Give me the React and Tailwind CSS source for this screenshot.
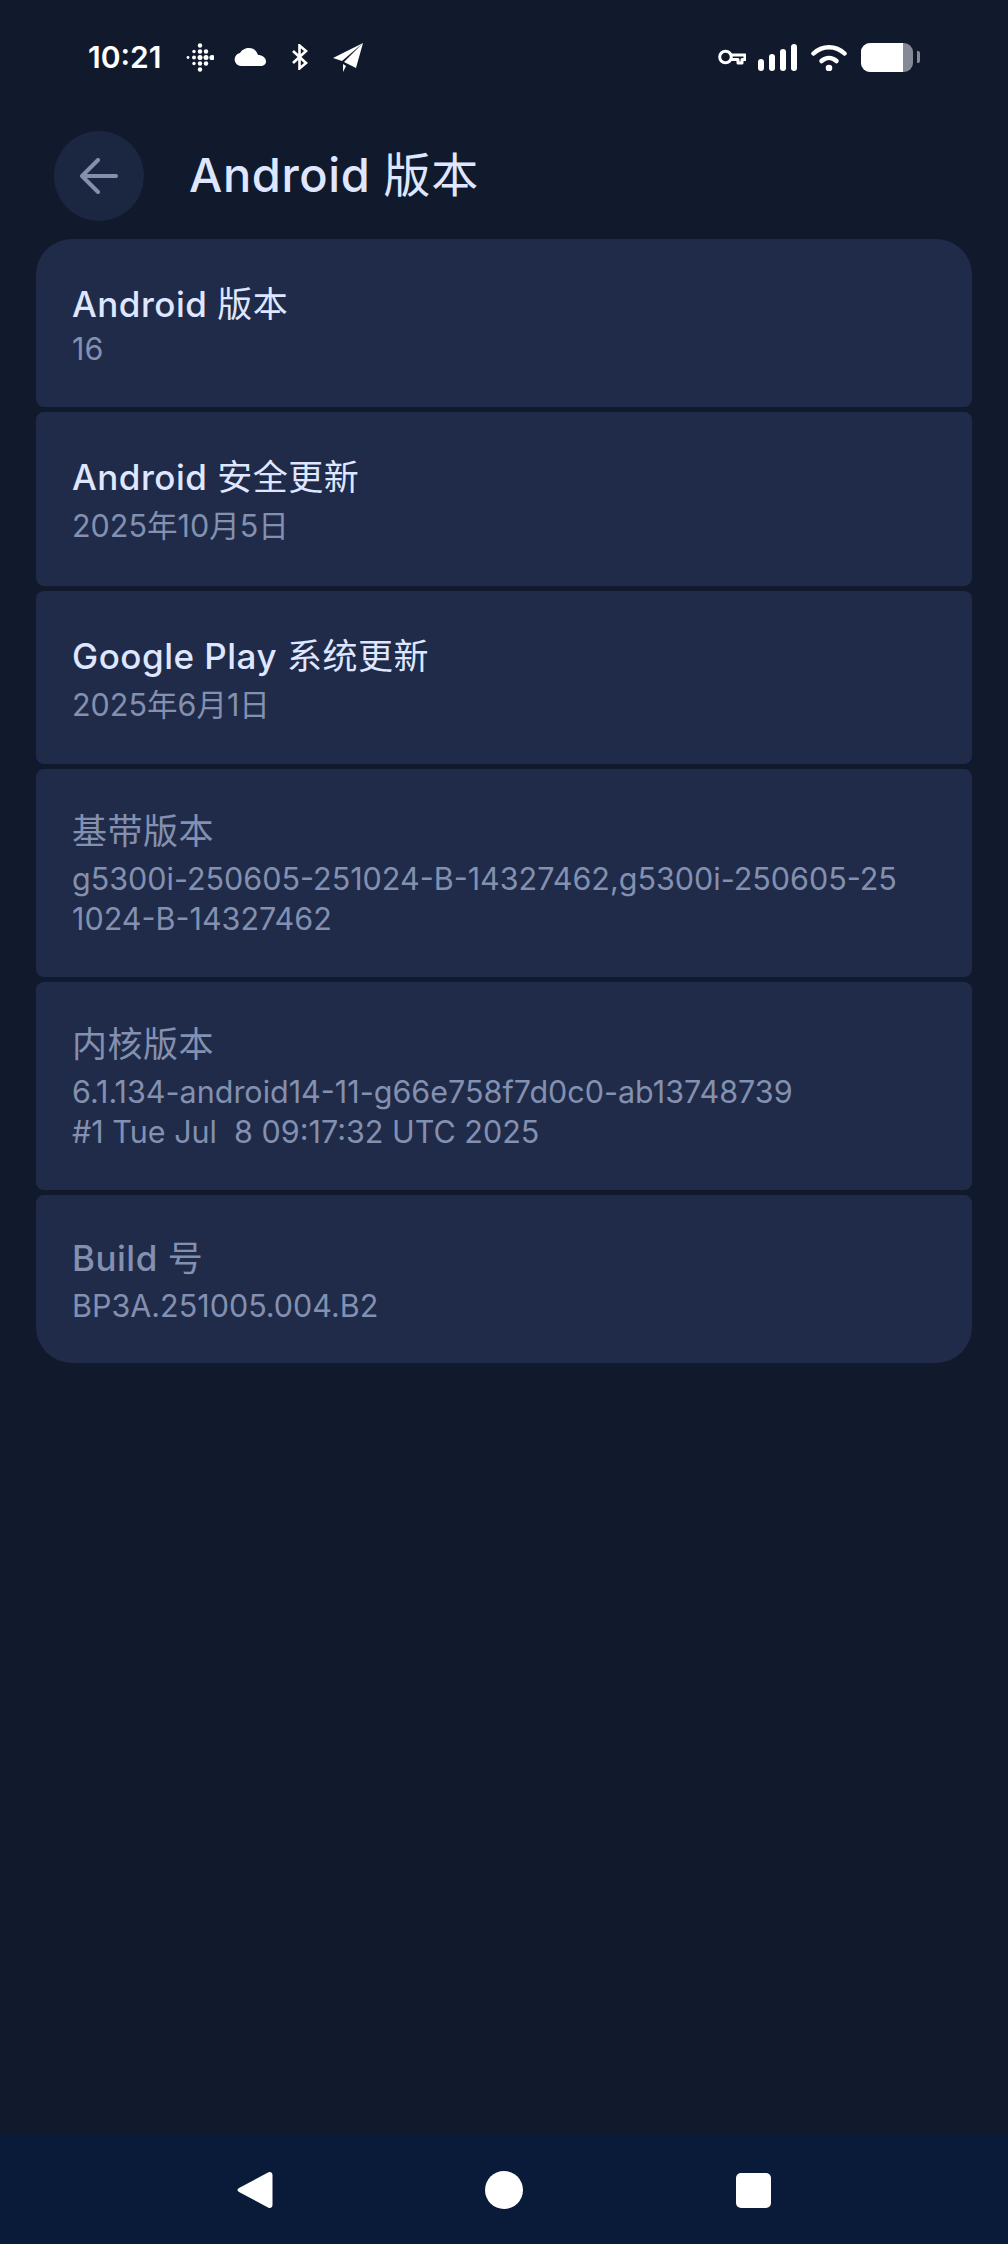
const FONT = "font-['Inter','Noto_Sans_CJK_SC',sans-serif]";

const rows = [
  { title: "Android 版本", lines: ["16"], h: "h-[168px]", pt: "pt-[43px]", gap: "mt-[3px]", top: "rounded-t-[36px] rounded-b-[8px]" },
  { title: "Android 安全更新", lines: ["2025年10月5日"], h: "h-[174px]", pt: "pt-[43px]", gap: "mt-[7px]" },
  { title: "Google Play 系统更新", lines: ["2025年6月1日"], h: "h-[173px]", pt: "pt-[43px]", gap: "mt-[7px]" },
  { title: "基带版本", lines: ["g5300i-250605-251024-B-14327462,g5300i-250605-251024-B-14327462"], h: "h-[208px]", pt: "pt-[40px]", gap: "mt-[6px]", dim: true },
  { title: "内核版本", lines: ["6.1.134-android14-11-g66e758f7d0c0-ab13748739", "#1 Tue Jul  8 09:17:32 UTC 2025"], h: "h-[208px]", pt: "pt-[40px]", gap: "mt-[6px]", dim: true },
  { title: "Build 号", lines: ["BP3A.251005.004.B2"], h: "h-[168px]", pt: "pt-[41px]", gap: "mt-[6px]", dim: true, top: "rounded-t-[8px] rounded-b-[36px]" },
];

// latin is a bit heavier than the CJK part in the reference
function Title({ text }) {
  return text.split(/([\u4e00-\u9fff]+)/).map((part, i) => (
    <span key={i} className={i % 2 ? "font-normal" : "font-medium"}>{part}</span>
  ));
}

function StatusLeft() {
  const dots = [
    [14, 2.5, 2.2], [14, 8.5, 2.2], [14, 14.5, 2.5], [14, 20.5, 2.2], [14, 26.5, 2.2],
    [8, 8.5, 1.7], [8, 14.5, 2], [8, 20.5, 1.7],
    [20, 8.5, 2.2], [20, 14.5, 2.5], [20, 20.5, 2.2],
    [2, 14.5, 1.4], [26, 14.5, 2.6],
  ];
  return (
    <div className="flex items-center">
      <span className="text-[30px] font-semibold text-white leading-none w-[98px] ml-[88px]">10:21</span>
      <svg width="28" height="29" viewBox="0 0 28 29" fill="#fff">
        {dots.map(([x, y, r], i) => <circle key={i} cx={x} cy={y} r={r} />)}
      </svg>
      <svg className="ml-[20px]" width="32" height="18" viewBox="0 0 32 18" fill="#fff">
        <path d="M7 18a6.500 6.500 0 0 1-1-12.900C7.500 2 11.500 0 15 0c4.500 0 8 3 9 7 4 0 8 2.500 8 6.500 0 2.800-2.500 4.500-5 4.500z" />
      </svg>
      <svg className="ml-[26px]" width="16" height="26" viewBox="0 0 16 26" fill="none" stroke="#fff" strokeWidth="2.600">
        <path d="M1 7l13 12-6.500 5.500V1.500L14 7 1 19" />
      </svg>
      <svg className="ml-[25px]" width="30" height="29" viewBox="0 0 30 29" fill="#fff">
        <path d="M30 0L0 15l9 3zM30 0L11 19l12 6zM10 21l3 2-3 6z" />
      </svg>
    </div>
  );
}

function StatusRight() {
  return (
    <div className="flex items-center mr-[88px]">
      <svg width="28" height="16" viewBox="0 0 28 16" fill="none" stroke="#fff" strokeWidth="3">
        <circle cx="7.500" cy="8" r="5.800" />
        <path d="M13 6h14v4.500h-3v3.500h-4v-3.500h-7" strokeLinejoin="round" />
      </svg>
      <div className="ml-[12px] flex items-end gap-[5px] h-[27px]">
        <div className="w-[6px] h-[12px] rounded-full bg-white" />
        <div className="w-[6px] h-[17px] rounded-full bg-white" />
        <div className="w-[6px] h-[22px] rounded-full bg-white" />
        <div className="w-[6px] h-[27px] rounded-full bg-white" />
      </div>
      <svg className="ml-[14px]" width="36" height="27" viewBox="0 0 36 27" fill="none" stroke="#fff" strokeWidth="4.500" strokeLinecap="round">
        <path d="M2.500 9.500C11 1 25 1 33.500 9.500" />
        <path d="M10.500 17C15 13 21 13 25.500 17" />
        <circle cx="18" cy="24" r="3.300" fill="#fff" stroke="none" />
      </svg>
      <div className="ml-[14px] flex items-center">
        <div className="w-[52px] h-[29px] rounded-[9px] overflow-hidden flex bg-[#858a96]">
          <div className="w-[42px] bg-white" />
        </div>
        <div className="ml-[4px] w-[3px] h-[12px] rounded-r-[2px] bg-[#858a96]" />
      </div>
    </div>
  );
}

function Card({ row }) {
  return (
    <div className={`${row.h} ${row.pt} ${row.top || "rounded-[8px]"} bg-[#202b49] pl-[36px] pr-[72px]`}>
      <div className={`text-[35px] leading-[44px] tracking-[0.5px] ${row.dim ? "text-[#8390b0]" : "text-[#dfe6ff]"}`}>
        <Title text={row.title} />
      </div>
      <div className={row.gap}>
        {row.lines.map((l, i) => (
          <div key={i} className="text-[30.5px] leading-[40px] text-[#8390b0] break-all whitespace-pre-wrap">{l}</div>
        ))}
      </div>
    </div>
  );
}

export default function App() {
  return (
    <div className={`h-[2244px] flex flex-col bg-[#111a2c] ${FONT}`}>
      <div className="h-[114px] flex items-center justify-between">
        <StatusLeft />
        <StatusRight />
      </div>
      <div className="h-[125px] flex items-start">
        <div className="ml-[54px] mt-[17px] w-[90px] h-[90px] rounded-full bg-[#1b2640] flex items-center justify-center">
          <svg width="38" height="36" viewBox="0 0 38 36" fill="none" stroke="#8390b0" strokeWidth="4" strokeLinecap="round" strokeLinejoin="round">
            <path d="M36 18H3M18 2L2 18l16 16" />
          </svg>
        </div>
        <h1 className="ml-[45px] mt-[31px] text-[47px] leading-[60px] text-[#dfe6ff] tracking-[0.6px]">
          <Title text="Android 版本" />
        </h1>
      </div>
      <div className="flex-1 px-[36px] flex flex-col gap-[5px]">
        {rows.map((r) => <Card key={r.title} row={r} />)}
      </div>
      <div className="h-[108px] bg-[#0a1b3a] flex items-center justify-center">
        <svg width="36" height="38" viewBox="0 0 36 38" fill="#fff">
          <path d="M31 1.500c2-1.500 4.500 0 4.500 2.500v30c0 2.500-2.500 4-4.500 2.500L2 21c-2-1-2-3 0-4z" />
        </svg>
        <div className="ml-[212px] w-[38px] h-[38px] rounded-full bg-white" />
        <div className="ml-[213px] w-[35px] h-[35px] rounded-[5px] bg-white" />
      </div>
    </div>
  );
}
